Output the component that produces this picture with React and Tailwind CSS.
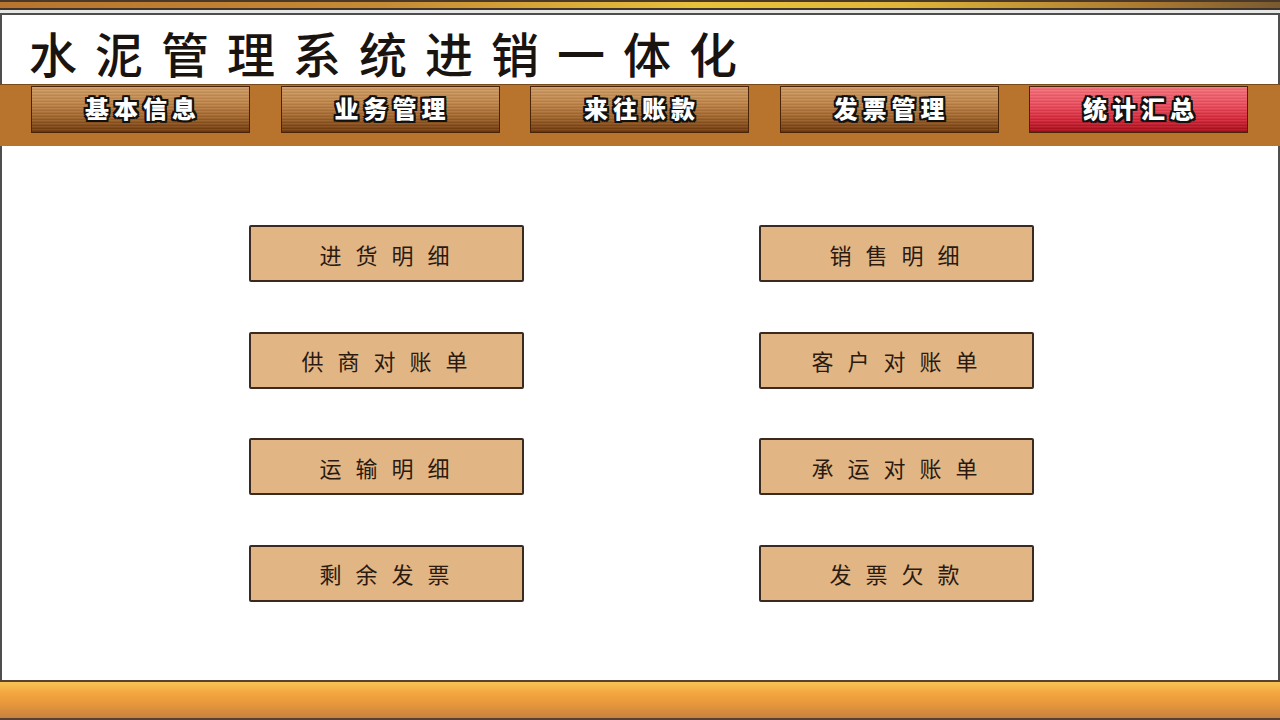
import React from "react";

const navItems = ["基本信息", "业务管理", "来往账款", "发票管理", "统计汇总"];
const leftItems = ["进货明细", "供商对账单", "运输明细", "剩余发票"];
const rightItems = ["销售明细", "客户对账单", "承运对账单", "发票欠款"];

const cjk = "font-['Noto_Sans_CJK_SC','Noto_Sans',sans-serif]";

function NavButton({ label, active }) {
  return (
    <div
      className={
        "relative flex h-[47px] w-[219px] items-center justify-center border border-[#4a2406] pb-[4px] " +
        (active
          ? "bg-[linear-gradient(to_bottom,#f7707c_0%,#ec4c5c_40%,#d8283a_70%,#a80816_100%)]"
          : "bg-[linear-gradient(to_bottom,#cf9a62_0%,#c08548_35%,#a3662c_65%,#6e3608_100%)]")
      }
    >
      <div className="pointer-events-none absolute inset-0 bg-[repeating-linear-gradient(to_bottom,rgba(255,255,255,0.08)_0px,rgba(255,255,255,0.08)_1px,rgba(0,0,0,0.06)_2px,rgba(0,0,0,0.06)_3px)]" />
      <span
        className={
          cjk +
          " relative pl-[5px] text-[24px] font-black leading-none tracking-[5px] text-white [text-shadow:-2px_-2px_0_#111,2px_-2px_0_#111,-2px_2px_0_#111,2px_2px_0_#111,0_-2px_0_#111,0_2px_0_#111,-2px_0_0_#111,2px_0_0_#111]"
        }
      >
        {label}
      </span>
    </div>
  );
}

function MainButton({ label }) {
  return (
    <div className="flex h-[57px] w-[275px] items-center justify-center rounded-[2px] border-2 border-[#3a2a20] bg-[#e2b585]">
      <span className={cjk + " pl-[10px] text-[22px] leading-none tracking-[14px] text-[#2a1a10]"}>
        {label}
      </span>
    </div>
  );
}

export default function App() {
  return (
    <div className="flex h-[720px] w-[1280px] flex-col overflow-hidden bg-white">
      {/* top stripe */}
      <div className="flex h-[15px] flex-col">
        <div className="h-[2px] bg-[#4a3828]" />
        <div className="h-[6px] bg-[linear-gradient(to_right,#b8742e_0%,#c68a34_30%,#e8c23c_55%,#e0b63a_70%,#a87830_90%,#7a5a30_100%)]" />
        <div className="h-[2px] bg-[#3e3430]" />
        <div className="h-[3px] bg-[#e6e6e4]" />
        <div className="h-[2px] bg-[#4e4e4e]" />
      </div>

      {/* title */}
      <div className="flex h-[69px] items-center border-x-2 border-[#4e4e4e] pl-[27px] pt-[4px]">
        <h1 className={cjk + " text-[48px] font-medium leading-none tracking-[18px] text-[#1a1410]"}>
          水泥管理系统进销一体化
        </h1>
      </div>

      {/* nav */}
      <div className="flex h-[62px] items-start gap-[30.5px] border-t border-[#7a4a1a] bg-[#b8742c] pl-[31px] pt-[1px]">
        {navItems.map((n, i) => (
          <NavButton key={n} label={n} active={i === 4} />
        ))}
      </div>

      {/* main */}
      <div className="flex flex-1 gap-[235px] border-x-2 border-[#4e4e4e] pl-[247px] pt-[79px]">
        <div className="flex flex-col gap-[49.5px]">
          {leftItems.map((l) => (
            <MainButton key={l} label={l} />
          ))}
        </div>
        <div className="flex flex-col gap-[49.5px]">
          {rightItems.map((l) => (
            <MainButton key={l} label={l} />
          ))}
        </div>
      </div>

      {/* footer */}
      <div className="flex h-[40px] flex-col">
        <div className="h-[2px] bg-[#5a4030]" />
        <div className="flex-1 bg-[linear-gradient(to_bottom,#f6c454_0%,#f4a640_30%,#e8983c_60%,#c8823e_100%)]" />
        <div className="h-[2px] bg-[#5a4030]" />
      </div>
    </div>
  );
}
